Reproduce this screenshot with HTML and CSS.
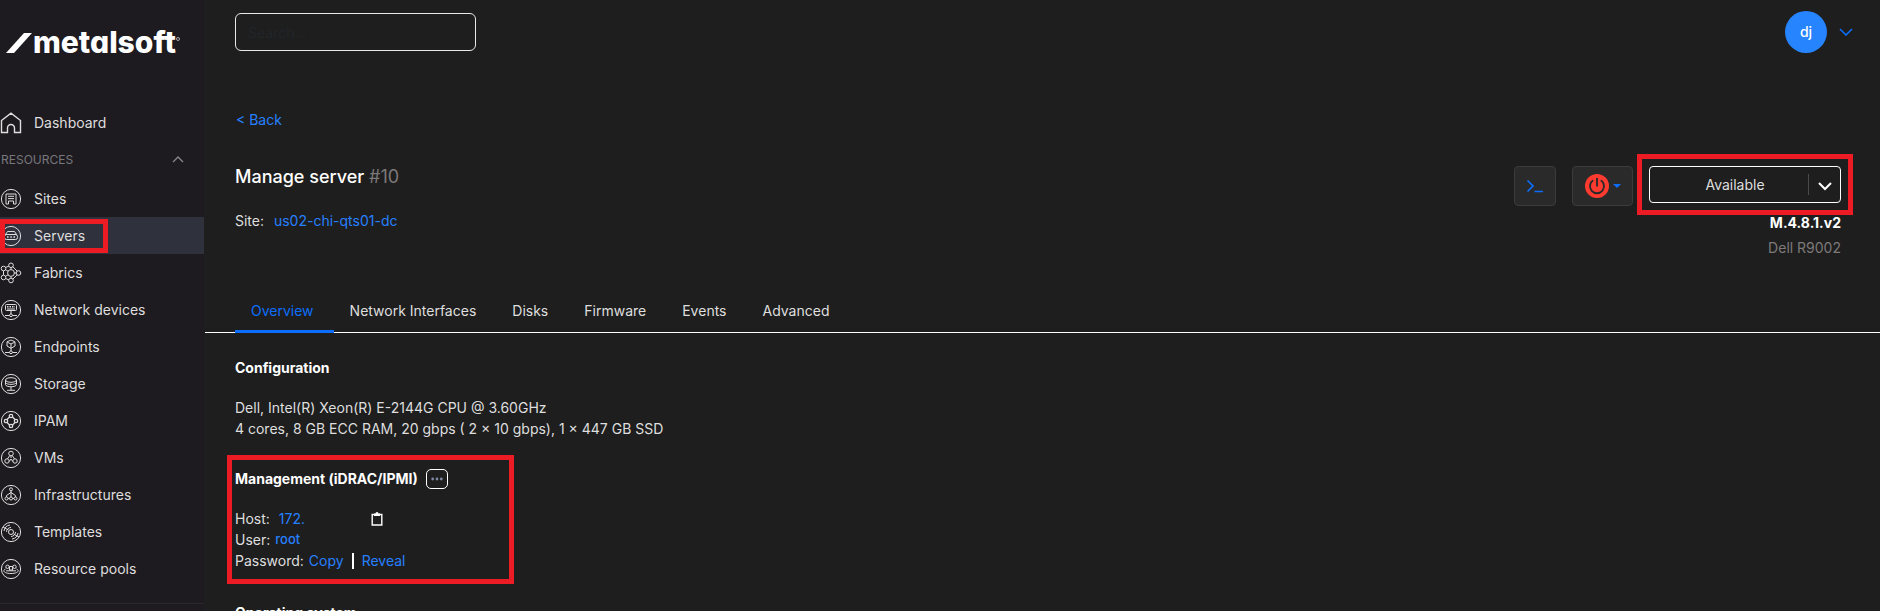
FILE: index.html
```html
<!DOCTYPE html>
<html lang="en">
<head>
  <meta charset="UTF-8">
  <meta name="viewport" content="width=device-width, initial-scale=1.0">
  <title>Manage server</title>
  <link rel="stylesheet" href="styles.css">
</head>
<body>
  <aside class="sidebar">
    <a class="logo" href="#">
      <svg width="26" height="21" viewBox="0 0 26 21"><path d="M0 21 L18 1 H26 L8 21 Z" fill="#fff"/></svg>
      <span class="logo-text">metalsoft</span><span class="logo-mark"></span>
    </a>

    <nav class="nav">
      <a class="nav-item" href="#">
        <svg class="icon" viewBox="0 0 22 22"><path d="M1.5 8.5 L11 1.2 L20.5 8.5 V20.5 H14.5 V16 A3.5 3.5 0 0 0 7.5 16 V20.5 H1.5 Z" stroke-width="1.4"/></svg>
        Dashboard
      </a>
      <button class="nav-group" type="button">
        RESOURCES
        <svg width="12" height="8" viewBox="0 0 12 8"><path d="M1 7 L6 2 L11 7" fill="none" stroke="#85858a" stroke-width="1.4"/></svg>
      </button>
      <a class="nav-item" href="#">
        <svg class="icon" viewBox="0 0 22 22"><circle cx="11" cy="11" r="9.6"/><path d="M6 6 H16 V16 H13.5 V13 H8.5 V16 H6 Z M8 8.3 H14 M8 10.6 H14"/></svg>
        Sites
      </a>
      <a class="nav-item active" href="#">
        <svg class="icon" viewBox="0 0 22 22"><circle cx="11" cy="11" r="9.6"/><path d="M7.5 6.5 H14.5 L16.5 9.5 H5.5 Z"/><rect x="4.5" y="9.5" width="13" height="5" rx="2"/><path d="M7 12 H8.5 M10.3 12 H11.8 M13.5 12 H15" stroke-width="1.6"/></svg>
        Servers
        <span class="highlight highlight-nav"></span>
      </a>
      <a class="nav-item" href="#">
        <svg class="icon" viewBox="0 0 22 22"><circle cx="11" cy="11" r="3.4"/><circle cx="11" cy="3.3" r="2.3"/><circle cx="11" cy="18.5" r="2.3"/><circle cx="18.5" cy="11" r="2.3"/><circle cx="3.5" cy="6.5" r="2.3"/><circle cx="3.5" cy="15.5" r="2.3"/><path d="M11 5.5 V7.5 M11 14.5 V16.3 M14.3 11 H16.3 M5.5 7.7 L8.2 9.3 M5.5 14.3 L8.2 12.7 M12.8 4.7 L17.2 9.2 M12.8 17.2 L17.2 12.8 M5.5 5.5 L9 4 M5.5 16.5 L9 18 M3.5 9 V13"/></svg>
        Fabrics
      </a>
      <a class="nav-item" href="#">
        <svg class="icon" viewBox="0 0 22 22"><circle cx="11" cy="11" r="9.6"/><rect x="5.5" y="5.5" width="11" height="6" rx="1"/><path d="M7 7.8 H15" stroke-width="1.6" stroke-dasharray="1.5 1"/><path d="M7 10 H15 M11 11.5 V15 M5 16.5 H9.5 M12.5 16.5 H17"/><circle cx="11" cy="16.3" r="1.4"/></svg>
        Network devices
      </a>
      <a class="nav-item" href="#">
        <svg class="icon" viewBox="0 0 22 22"><circle cx="11" cy="11" r="9.6"/><path d="M11 4 L15 5.8 V10 L11 12.3 L7 10 V5.8 Z M7.3 6.2 L11 8 L14.7 6.2 M11 8 V15 M5 16.5 H9.5 M12.5 16.5 H17"/><circle cx="11" cy="16.3" r="1.4"/></svg>
        Endpoints
      </a>
      <a class="nav-item" href="#">
        <svg class="icon" viewBox="0 0 22 22"><circle cx="11" cy="11" r="9.6"/><ellipse cx="11" cy="7" rx="5.5" ry="2.3"/><path d="M5.5 7 V11.5 C5.5 14.5 16.5 14.5 16.5 11.5 V7 M5.5 9.5 C6.5 12 15.5 12 16.5 9.5 M11 14 V17 M7 17.3 H15"/></svg>
        Storage
      </a>
      <a class="nav-item" href="#">
        <svg class="icon" viewBox="0 0 22 22"><circle cx="11" cy="11" r="9.6"/><g stroke-width="1.3"><circle cx="11" cy="6" r="1.7"/><circle cx="11" cy="16" r="1.7"/><circle cx="6" cy="11" r="1.7"/><circle cx="16" cy="11" r="1.7"/><path d="M9.5 7 L7 9.5 M12.5 7 L15 9.5 M7 12.5 L9.5 15 M15 12.5 L12.5 15"/></g></svg>
        IPAM
      </a>
      <a class="nav-item" href="#">
        <svg class="icon" viewBox="0 0 22 22"><circle cx="11" cy="11" r="9.6"/><circle cx="11" cy="6.5" r="2.3"/><circle cx="7" cy="14" r="2.2"/><circle cx="15" cy="14" r="2.2"/><path d="M11 9 V11 M9.8 8.5 L7.5 11.8 M12.2 8.5 L14.5 11.8 M9.2 14.5 L11 12 L12.8 14.5"/></svg>
        VMs
      </a>
      <a class="nav-item" href="#">
        <svg class="icon" viewBox="0 0 22 22"><circle cx="11" cy="11" r="9.6"/><circle cx="11" cy="5.3" r="1.5"/><circle cx="6.5" cy="14.5" r="1.5"/><circle cx="11" cy="14.5" r="1.5"/><circle cx="15.5" cy="14.5" r="1.5"/><path d="M11 7 V13 M6.5 13 V11.5 L11 8.5 L15.5 11.5 V13 M8 14.5 H9.5 M12.5 14.5 H14"/></svg>
        Infrastructures
      </a>
      <a class="nav-item" href="#">
        <svg class="icon" viewBox="0 0 22 22"><circle cx="11" cy="11" r="9.6"/><circle cx="11" cy="11" r="2.5"/><path d="M6.5 11 A4.5 4.5 0 0 1 11 6.5 M4 10 A7 7 0 0 1 10 4 M15.5 11 A4.5 4.5 0 0 1 11 15.5 M18 12 A7 7 0 0 1 12 18 M3 6 L8.5 9 M13.5 13 L19 16"/></svg>
        Templates
      </a>
      <a class="nav-item" href="#">
        <svg class="icon" viewBox="0 0 22 22"><circle cx="11" cy="11" r="9.6"/><path d="M5.5 11 C2 12.5 4 15.5 11 15.5 S20 12.5 16.5 11"/><path d="M6 12.8 H16"/><circle cx="7.5" cy="8.8" r="1.7"/><circle cx="14.5" cy="8.8" r="1.7"/><rect x="9.5" y="8.5" width="3" height="3.5"/></svg>
        Resource pools
      </a>
    </nav>
  </aside>

  <main class="main">
    <header class="topbar">
      <input class="search" type="text" placeholder="Search..." aria-label="Search">
      <button class="user" type="button">
        <span class="avatar">dj</span>
        <svg width="14" height="8" viewBox="0 0 14 8"><path d="M1 1 L7 7 L13 1" fill="none" stroke="#0d6efd" stroke-width="1.6"/></svg>
      </button>
    </header>

    <a class="back" href="#">&lt; Back</a>

    <section class="server-head">
      <div>
        <h1 class="title">Manage server <span class="muted">#10</span></h1>
        <p class="site">Site: <a href="#">us02-chi-qts01-dc</a></p>
      </div>
      <div class="server-side">
        <div class="actions">
          <button class="action" type="button" aria-label="Console">
            <svg width="18" height="14" viewBox="0 0 18 14"><path d="M1.5 1.5 L7 7 L1.5 12.5 M8.5 12.5 H17" fill="none" stroke="#0d6efd" stroke-width="1.7"/></svg>
          </button>
          <button class="action power" type="button" aria-label="Power">
            <svg width="24" height="24" viewBox="0 0 24 24"><circle cx="12" cy="12" r="12" fill="#ff3b30"/><path d="M8.2 6.3 A7 7 0 1 0 15.8 6.3 M12 4 V12.5" fill="none" stroke="#2b2a2a" stroke-width="1.9"/></svg>
            <svg width="8" height="4" viewBox="0 0 8 4"><path d="M0 0 H8 L4 4 Z" fill="#0d6efd"/></svg>
          </button>
          <div class="status">
            <select class="status-select" aria-label="Server status">
              <option>Available</option>
            </select>
            <svg class="status-arrow" width="33" height="21" viewBox="0 0 33 21"><path d="M0.5 0 V21" stroke="#4a4a4a"/><path d="M11 9 L17 15 L23 9" fill="none" stroke="#fff" stroke-width="2"/></svg>
            <span class="highlight highlight-status"></span>
          </div>
        </div>
        <p class="model">M.4.8.1.v2</p>
        <p class="muted">Dell R9002</p>
      </div>
    </section>

    <nav class="tabs">
      <a class="tab active" href="#">Overview</a>
      <a class="tab" href="#">Network Interfaces</a>
      <a class="tab" href="#">Disks</a>
      <a class="tab" href="#">Firmware</a>
      <a class="tab" href="#">Events</a>
      <a class="tab" href="#">Advanced</a>
    </nav>

    <section class="details">
      <h2 class="heading">Configuration</h2>
      <p>Dell, Intel(R) Xeon(R) E-2144G CPU @ 3.60GHz</p>
      <p>4 cores, 8 GB ECC RAM, 20 gbps ( 2 × 10 gbps), 1 × 447 GB SSD</p>

      <div class="management">
        <span class="highlight highlight-management"></span>
        <h2 class="heading">
          Management (iDRAC/IPMI)
          <button class="more" type="button" aria-label="More">
            <svg width="12" height="4" viewBox="0 0 12 4" fill="#7d86a3"><circle cx="1.7" cy="2" r="1.4"/><circle cx="6" cy="2" r="1.4"/><circle cx="10.3" cy="2" r="1.4"/></svg>
          </button>
        </h2>
        <p class="field">Host:
          <a class="host" href="#">172.</a>
          <button class="copy" type="button" aria-label="Copy host">
            <svg width="12" height="14" viewBox="0 0 12 14"><path d="M1.2 2.5 H10.8 V13 H1.2 Z" fill="none" stroke="#fff" stroke-width="1.4"/><path d="M3 1.5 H4.5 A1.5 1.5 0 0 1 7.5 1.5 H9 V4 H3 Z" fill="#fff"/></svg>
          </button>
        </p>
        <p class="field">User: <a class="root" href="#">root</a></p>
        <p class="field">Password: <a href="#">Copy</a> <span class="bar"></span> <a href="#">Reveal</a></p>
      </div>

      <h2 class="heading">Operating system</h2>
    </section>
  </main>
</body>
</html>
```
FILE: styles.css
```css
* {
  box-sizing: border-box;
}

body {
  margin: 0;
  display: flex;
  height: 100vh;
  overflow: hidden;
  background: #1e1e1e;
  color: #dedede;
  font-family: Inter, sans-serif;
  font-size: 14px;
  line-height: 21px;
}

h1, h2, p {
  margin: 0;
}

a {
  color: #2680ff;
  text-decoration: none;
}

button {
  padding: 0;
  border: none;
  background: none;
  color: inherit;
  font: inherit;
  cursor: pointer;
}

svg {
  display: block;
  flex-shrink: 0;
}

.muted {
  color: #7d7979;
}

/* red callout frames */
.highlight {
  position: absolute;
  border: 5px solid #ed1c24;
  pointer-events: none;
}

/* sidebar */
.sidebar {
  flex: 0 0 205px;
  border-right: 1px solid #1e1e1e;
  background: #1e1b20;
}

.logo {
  display: flex;
  align-items: center;
  height: 84px;
  padding-left: 6px;
  color: #fff;
}

.logo-text {
  margin-left: 1px;
  font-size: 30px;
  font-weight: 800;
  font-feature-settings: "cv11";
}

.logo-mark {
  width: 4px;
  height: 4px;
  margin-bottom: 6px;
  border: 1px solid #aaa;
  border-radius: 50%;
}

.nav {
  padding: 20px 0 16px;
  border-bottom: 1px solid #2a282c;
}

.nav-item {
  position: relative;
  display: flex;
  align-items: center;
  gap: 12px;
  height: 37px;
  color: #dedede;
}

.nav-item.active {
  background: #2f313d;
}

.icon {
  width: 22px;
  height: 22px;
  fill: none;
  stroke: #dedede;
  stroke-width: 1;
}

.nav-group {
  display: flex;
  align-items: center;
  justify-content: space-between;
  width: 100%;
  height: 36px;
  margin-bottom: 3px;
  padding: 0 20px 0 1px;
  color: #77777c;
  font-size: 12px;
}

.highlight-nav {
  top: 2px;
  left: 0;
  width: 108px;
  height: 34px;
}

/* main column */
.main {
  flex: 1;
  min-width: 0;
}

.topbar {
  display: flex;
  align-items: center;
  justify-content: space-between;
  padding: 11px 27px 0 30px;
}

.search {
  width: 241px;
  height: 38px;
  padding: 0 12px;
  border: 1px solid #e8e8e8;
  border-radius: 6px;
  background: transparent;
  color: #dedede;
  font: inherit;
}

.search::placeholder {
  color: #212529;
  opacity: 1;
}

.user {
  display: flex;
  align-items: center;
  gap: 12px;
}

.avatar {
  width: 42px;
  height: 42px;
  border-radius: 50%;
  background: #2684ff;
  color: #fff;
  font-weight: 500;
  line-height: 42px;
}

.back {
  display: inline-block;
  margin: 56px 0 0 31px;
}

.server-head {
  display: flex;
  justify-content: space-between;
  padding: 36px 39px 0 30px;
}

.title {
  color: #fff;
  font-size: 18px;
  font-weight: 500;
}

.title .muted {
  font-weight: 400;
}

.site {
  margin-top: 23px;
}

.site a {
  margin-left: 6px;
}

.server-side {
  text-align: right;
}

.actions {
  display: flex;
  gap: 16px;
  margin-bottom: 6px;
}

.action {
  display: flex;
  align-items: center;
  justify-content: center;
  width: 42px;
  height: 40px;
  border: 1px solid #3b3b3b;
  border-radius: 4px;
  background: #2b2a2a;
}

.power {
  gap: 4px;
  width: 61px;
}

.status {
  position: relative;
  width: 192px;
}

.status-select {
  width: 100%;
  height: 37px;
  padding: 0 32px 0 12px;
  border: 1px solid #fff;
  border-radius: 4px;
  appearance: none;
  background: transparent;
  color: #dedede;
  font: inherit;
  text-align-last: center;
}

.status-arrow {
  position: absolute;
  top: 8px;
  right: 0;
  pointer-events: none;
}

.highlight-status {
  top: -12px;
  right: -12px;
  left: -12px;
  height: 61px;
}

.model {
  margin-bottom: 4px;
  color: #fff;
  font-weight: 700;
}

.tabs {
  display: flex;
  margin-top: 33px;
  padding-left: 30px;
  border-bottom: 1px solid #fff;
}

.tab {
  margin-bottom: -1px;
  padding: 9px 20px 9px 16px;
  border-bottom: 3px solid transparent;
  color: #dedede;
}

.tab.active {
  border-color: #0d6efd;
  color: #0d6efd;
}

.details {
  padding: 24px 30px 0;
}

.heading {
  display: flex;
  align-items: center;
  gap: 8px;
  margin-bottom: 19px;
  color: #fff;
  font-size: 14px;
  font-weight: 700;
}

.management {
  position: relative;
  margin: 29px 0 31px;
}

.highlight-management {
  top: -13px;
  left: -8px;
  width: 287px;
  height: 129px;
}

.more {
  display: flex;
  align-items: center;
  justify-content: center;
  width: 22px;
  height: 20px;
  border: 1px solid #fff;
  border-radius: 5px;
}

.field {
  display: flex;
  align-items: center;
  gap: 5px;
}

.host {
  width: 87px;
  margin-left: 4px;
}

.root {
  font-size: 13px;
  font-weight: 500;
}

.bar {
  width: 2px;
  height: 16px;
  margin: 0 3px;
  background: #fff;
}
```
